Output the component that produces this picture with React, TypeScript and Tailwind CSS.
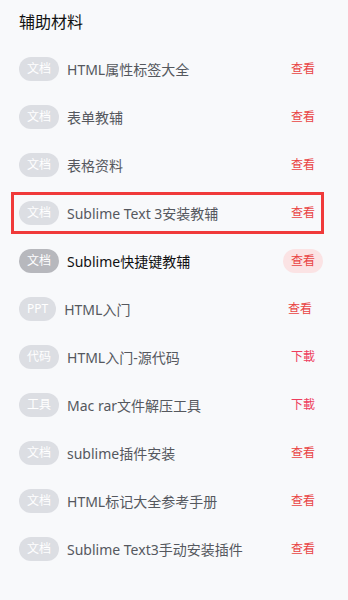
const items = [
  { tag: '文档', title: 'HTML属性标签大全', action: '查看' },
  { tag: '文档', title: '表单教辅', action: '查看' },
  { tag: '文档', title: '表格资料', action: '查看' },
  { tag: '文档', title: 'Sublime Text 3安装教辅', action: '查看', framed: true },
  { tag: '文档', title: 'Sublime快捷键教辅', action: '查看', active: true },
  { tag: 'PPT', title: 'HTML入门', action: '查看', shift: true },
  { tag: '代码', title: 'HTML入门-源代码', action: '下載' },
  { tag: '工具', title: 'Mac rar文件解压工具', action: '下載' },
  { tag: '文档', title: 'sublime插件安装', action: '查看' },
  { tag: '文档', title: 'HTML标记大全参考手册', action: '查看' },
  { tag: '文档', title: 'Sublime Text3手动安装插件', action: '查看' },
]

const Row = ({ item }: { item: (typeof items)[number] }) => {
  return (
    <li className="relative flex h-12 items-center">
      {item.framed && (
        <span className="pointer-events-none absolute top-[3px] bottom-[3px] left-[-8px] right-[-1px] border-[3px] border-[#f03a3a]" />
      )}
      <span
        className={`flex h-6 items-center rounded-full px-2 text-[12px] leading-none text-white ${
          item.active ? 'bg-[#b7b8bd]' : 'bg-[#dcdee3]'
        }`}
      >
        {item.tag}
      </span>
      <span
        className={`ml-2 flex-1 truncate text-[14px] ${
          item.active ? 'text-[#111]' : 'text-[#55585e]'
        }`}
      >
        {item.title}
      </span>
      <span
        className={`flex h-6 items-center rounded-full px-2 text-[12px] leading-none ${
          item.action === '下載' ? 'text-[#ee3d5e]' : 'text-[#e94343]'
        } ${item.active ? 'bg-[#fbe3e4]' : ''} ${item.shift ? 'mr-[3px]' : ''}`}
      >
        {item.action}
      </span>
    </li>
  )
}

export default function App() {
  return (
    <div
      className="min-h-[600px] w-[348px] bg-[#f8f9fb] pt-[10px] pl-[19px] pr-[25px]"
      style={{ fontFamily: '"Noto Sans", "Noto Sans CJK SC", sans-serif' }}
    >
      <h2 className="text-[16px] leading-6 text-[#111]">辅助材料</h2>
      <ul className="mt-[11px]">
        {items.map((item, i) => (
          <Row key={i} item={item} />
        ))}
      </ul>
    </div>
  )
}
